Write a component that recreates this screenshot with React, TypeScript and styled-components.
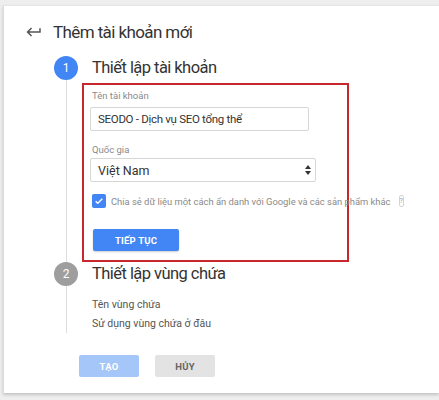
import styled, {createGlobalStyle} from 'styled-components';

const GlobalStyle = createGlobalStyle`
  html, body {
    margin: 0;
    padding: 0;
    background: #eeeeee;
    font-family: Roboto, 'Liberation Sans', Arial, sans-serif;
  }
`;

const Page = styled.div`
  width: 439px;
  height: 400px;
  padding: 5px 0 0 3px;
  box-sizing: border-box;
  overflow: hidden;
`;

const Card = styled.div`
  height: 388px;
  box-sizing: border-box;
  background: #fff;
  border-left: 1px solid #dcdcdc;
  border-top: 1px solid #e6e6e6;
  box-shadow: 0 2px 3px rgba(0, 0, 0, 0.18);
`;

const Header = styled.div`
  display: flex;
  align-items: center;
  gap: 10px;
  height: 24px;
  padding: 14px 0 0 21px;
`;

const BackIcon = styled.svg`
  width: 18px;
  height: 18px;
  fill: #555;
`;

const Title = styled.div`
  font-size: 17px;
  letter-spacing: -0.6px;
  color: #333;
  line-height: 24px;
`;

const Steps = styled.div`
  margin-top: 12px;
  padding-left: 50px;
`;

const Step = styled.div<{$bottom?: number}>`
  display: grid;
  grid-template-columns: 24px 1fr;
  column-gap: 14px;
  padding-bottom: ${({$bottom}) => $bottom ?? 0}px;
`;

const Marker = styled.div`
  display: flex;
  flex-direction: column;
  align-items: center;
`;

const Circle = styled.div<{$active?: boolean}>`
  width: 24px;
  height: 24px;
  border-radius: 50%;
  background: ${({$active}) => ($active ? '#4285f4' : '#9e9e9e')};
  color: #fff;
  font-size: 12px;
  display: flex;
  align-items: center;
  justify-content: center;
`;

const Line = styled.div`
  flex: 1;
  width: 1px;
  background: #dedede;
`;

const StepBody = styled.div`
  min-width: 0;
`;

const StepTitle = styled.div`
  font-size: 16.5px;
  letter-spacing: -0.55px;
  color: #333;
  line-height: 24px;
`;

const Highlight = styled.div`
  margin: 3px 0 0 -10px;
  width: 267px;
  box-sizing: border-box;
  border: 2px solid #c8272e;
  padding: 4px 0 9px 6px;
`;

const Label = styled.div<{$top?: number}>`
  font-size: 9.5px;
  color: #8a8a8a;
  line-height: 14px;
  padding-left: 2px;
  margin-top: ${({$top}) => $top ?? 0}px;
`;

const Input = styled.div`
  margin-top: 4px;
  width: 219px;
  height: 24px;
  box-sizing: border-box;
  border: 1px solid #d6d6d6;
  border-radius: 2px;
  padding-left: 7px;
  display: flex;
  align-items: center;
  font-size: 11.5px;
  letter-spacing: -0.3px;
  color: #333;
`;

const Select = styled(Input)`
  margin-top: 1px;
  width: 226px;
  justify-content: space-between;
  padding-right: 4px;
  font-size: 12.5px;
  letter-spacing: 0;
`;

const SelectArrows = styled.svg`
  width: 6px;
  height: 10px;
  fill: #333;
`;

const CheckRow = styled.div`
  margin-top: 12px;
  display: flex;
  align-items: center;
  gap: 5px;
  padding-left: 2px;
  white-space: nowrap;
`;

const CheckBox = styled.div`
  width: 14px;
  height: 14px;
  border-radius: 2px;
  background: #4285f4;
  display: flex;
  align-items: center;
  justify-content: center;
  flex-shrink: 0;
`;

const CheckText = styled.span`
  font-size: 9.4px;
  color: #8a8a8a;
`;

const Help = styled.span`
  margin-left: 3px;
  width: 9px;
  height: 10px;
  border: 1px solid #d4d4d4;
  border-radius: 2px;
  font-size: 7px;
  color: #999;
  display: inline-flex;
  align-items: center;
  justify-content: center;
`;

const Button = styled.button<{$variant: 'primary' | 'disabled' | 'flat'}>`
  height: 22px;
  border: none;
  border-radius: 2px;
  font-family: inherit;
  font-size: 9.5px;
  font-weight: 700;
  letter-spacing: 0.2px;
  background: ${({$variant}) =>
    $variant === 'primary' ? '#4285f4' : $variant === 'disabled' ? '#a5c6f8' : '#e3e3e3'};
  color: ${({$variant}) => ($variant === 'flat' ? '#666' : '#fff')};
  box-shadow: ${({$variant}) => ($variant === 'primary' ? '0 1px 2px rgba(0,0,0,0.2)' : 'none')};
  padding: 0;
`;

const NextButton = styled(Button)`
  margin: 21px 0 0 3px;
  width: 86px;
`;

const SubItem = styled.div<{$top?: number}>`
  font-size: 10.5px;
  color: #555;
  line-height: 19px;
  margin-top: ${({$top}) => $top ?? 0}px;
`;

const Actions = styled.div`
  display: flex;
  gap: 16px;
  margin-top: 13px;
  padding-left: 75px;
`;

const ActionButton = styled(Button)`
  width: 60px;
`;

export default function App() {
  return (
    <>
      <GlobalStyle />
      <Page>
        <Card>
          <Header>
            <BackIcon viewBox="0 0 24 24">
              <path d="M19 7v4H5.83l3.58-3.59L8 6l-6 6 6 6 1.41-1.41L5.83 13H21V7z" />
            </BackIcon>
            <Title>Thêm tài khoản mới</Title>
          </Header>
          <Steps>
            <Step>
              <Marker>
                <Circle $active>1</Circle>
                <Line />
              </Marker>
              <StepBody>
                <StepTitle>Thiết lập tài khoản</StepTitle>
                <Highlight>
                  <Label>Tên tài khoản</Label>
                  <Input>SEODO - Dịch vụ SEO tổng thể</Input>
                  <Label $top={12}>Quốc gia</Label>
                  <Select>
                    Việt Nam
                    <SelectArrows viewBox="0 0 6 10">
                      <path d="M3 0L6 4H0z M3 10L0 6h6z" />
                    </SelectArrows>
                  </Select>
                  <CheckRow>
                    <CheckBox>
                      <svg width="10" height="10" viewBox="0 0 24 24">
                        <path d="M4 12.5l5 5L20 6.5" fill="none" stroke="#fff" strokeWidth="3.2" />
                      </svg>
                    </CheckBox>
                    <CheckText>Chia sẻ dữ liệu một cách ẩn danh với Google và các sản phẩm khác</CheckText>
                    <Help>?</Help>
                  </CheckRow>
                  <NextButton $variant="primary">TIẾP TỤC</NextButton>
                </Highlight>
              </StepBody>
            </Step>
            <Step $bottom={9}>
              <Marker>
                <Circle>2</Circle>
                <Line />
              </Marker>
              <StepBody>
                <StepTitle>Thiết lập vùng chứa</StepTitle>
                <SubItem $top={9}>Tên vùng chứa</SubItem>
                <SubItem>Sử dụng vùng chứa ở đâu</SubItem>
              </StepBody>
            </Step>
          </Steps>
          <Actions>
            <ActionButton $variant="disabled">TẠO</ActionButton>
            <ActionButton $variant="flat">HỦY</ActionButton>
          </Actions>
        </Card>
      </Page>
    </>
  );
}
